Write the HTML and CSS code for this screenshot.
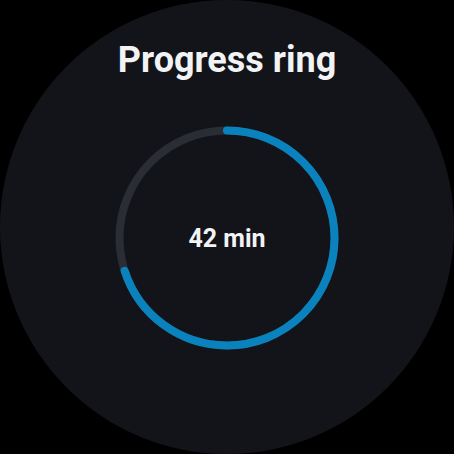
FILE: index.html
```html
<!DOCTYPE html>
<html lang="en">

<head>
  <meta charset="UTF-8" />
  <title>Progress ring</title>
  <link rel="stylesheet" href="styles.css">
</head>

<body>
  <div class="watch">
    <h1 class="title">Progress ring</h1>
    <div class="ring">
      <svg class="ring-svg" width="224" height="224" viewBox="0 0 224 224">
        <circle class="ring-track" cx="112" cy="112" r="107.5" />
        <!-- 70% of the circumference, starting at 12 o'clock -->
        <circle class="ring-fill" cx="112" cy="112" r="107.5"
          stroke-dasharray="472.8 675.4" transform="rotate(-90 112 112)" />
      </svg>
      <div class="ring-label">42 min</div>
    </div>
  </div>
</body>

</html>
```

FILE: styles.css
```css
body {
  margin: 0;
  background: #000;
  font-family: Roboto, "Liberation Sans", sans-serif;
}

.watch {
  width: 454px;
  height: 454px;
  border-radius: 50%;
  background: #121419;
  display: flex;
  flex-direction: column;
  align-items: center;
}

.title {
  margin: 40px 0 0;
  font-size: 36px;
  line-height: 40px;
  font-weight: 700;
  color: #f2f3f5;
}

.ring {
  position: relative;
  margin-top: 46px;
  width: 224px;
  height: 224px;
}

.ring-svg {
  display: block;
}

.ring-track,
.ring-fill {
  fill: none;
  stroke-width: 8;
}

.ring-track {
  stroke: #2a2d33;
}

.ring-fill {
  stroke: #0a82bd;
  stroke-linecap: round;
}

.ring-label {
  position: absolute;
  inset: 0;
  display: flex;
  align-items: center;
  justify-content: center;
  font-size: 25px;
  font-weight: 700;
  color: #f2f3f5;
}
```
